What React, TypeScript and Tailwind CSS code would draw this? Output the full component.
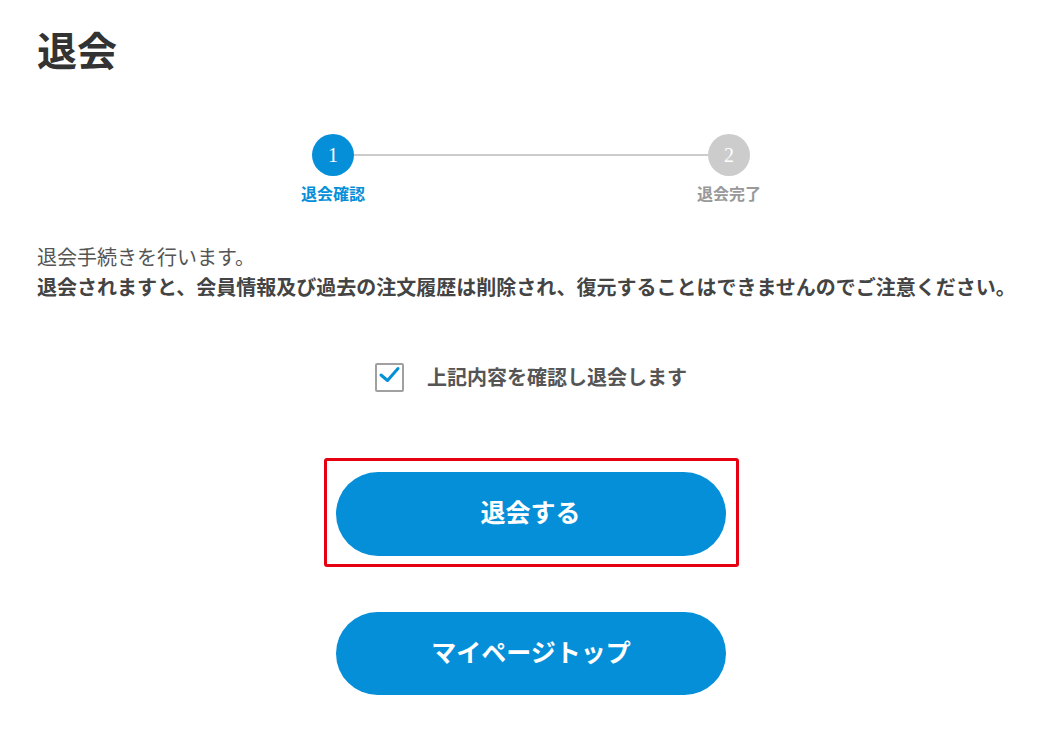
import React, { useState } from 'react';

const jp = '[font-family:"Noto_Sans_CJK_JP","Noto_Sans",sans-serif]';

function Stepper() {
    return (
        <div className="mx-auto mt-[61px] w-[476px]">
            <div className="flex items-center px-[19px]">
                <div className="w-[42px] h-[42px] rounded-full bg-[#068fd9] flex items-center justify-center text-white text-[20px] font-['Liberation_Serif',serif]">
                    1
                </div>
                <div className="flex-1 h-[2px] bg-[#cccccc]" />
                <div className="w-[42px] h-[42px] rounded-full bg-[#cccccc] flex items-center justify-center text-white text-[20px] font-['Liberation_Serif',serif]">
                    2
                </div>
            </div>
            <div className="mt-[5px] flex justify-between">
                <div className="w-[80px] text-center text-[16px] leading-[24px] font-bold text-[#068fd9]">退会確認</div>
                <div className="w-[80px] text-center text-[16px] leading-[24px] font-bold text-[#999999]">退会完了</div>
            </div>
        </div>
    );
}

export default function App() {
    const [agreed, setAgreed] = useState(true);

    return (
        <div className={`min-h-screen bg-white ${jp}`}>
            <div className="ml-[37px] w-[988px] pb-[48px]">
                {/* Title */}
                <h1 className="mt-[25px] text-[40px] leading-[48px] font-bold text-[#333333]">退会</h1>

                {/* Steps */}
                <Stepper />

                {/* Notice */}
                <div className="mt-[37px] text-[20px] leading-[30px] text-[#555555] whitespace-nowrap">
                    <p>退会手続きを行います。</p>
                    <p className="font-bold text-[#444444]">
                        退会されますと、会員情報及び過去の注文履歴は削除され、復元することはできませんのでご注意ください。
                    </p>
                </div>

                {/* Agreement */}
                <label className="mt-[60px] flex items-center justify-center gap-[23px] h-[30px] cursor-pointer select-none">
                    <span
                        onClick={() => setAgreed(!agreed)}
                        className="w-[29px] h-[29px] border-2 border-[#a0a0a0] rounded-[2px] bg-white flex items-center justify-center"
                    >
                        {agreed && (
                            <svg width="25" height="25" viewBox="0 0 25 25" fill="none">
                                <path d="M4 10 L10.5 15.5 L21 3.5" stroke="#068fd9" strokeWidth="3" strokeLinecap="round" strokeLinejoin="round" />
                            </svg>
                        )}
                    </span>
                    <span className="text-[20px] leading-[30px] font-bold text-[#555555]">上記内容を確認し退会します</span>
                </label>

                {/* Actions */}
                <div className="mt-[66px] flex flex-col items-center">
                    <div className="border-[3px] border-[#e60012] rounded-[3px] pl-[9px] pr-[10px] pt-[11px] pb-[8px]">
                        <button className="w-[390px] h-[84px] pb-[4px] rounded-full bg-[#068fd9] text-white text-[25px] font-bold">
                            退会する
                        </button>
                    </div>
                    <button className="mt-[45px] w-[390px] h-[83px] pb-[4px] rounded-full bg-[#068fd9] text-white text-[25px] font-bold">
                        マイページトップ
                    </button>
                </div>
            </div>
        </div>
    );
}
